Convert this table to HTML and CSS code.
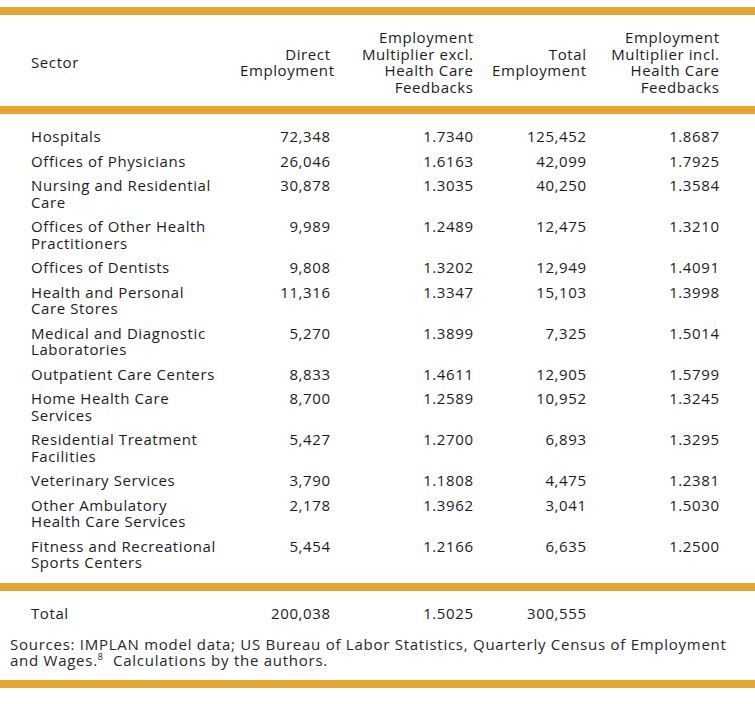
FILE: index.html
```html
<!DOCTYPE html>
<html lang="en">
<head>
<meta charset="utf-8">
<title>Health care employment multipliers</title>
<link rel="stylesheet" href="styles.css">
</head>
<body>
<div class="page">
  <div class="bar"></div>
  <div class="grid head">
    <div class="left">Sector</div>
    <div class="num">Direct<br>Employment</div>
    <div class="num">Employment<br>Multiplier excl.<br>Health Care<br>Feedbacks</div>
    <div class="num">Total<br>Employment</div>
    <div class="num">Employment<br>Multiplier incl.<br>Health Care<br>Feedbacks</div>
  </div>
  <div class="bar"></div>
  <div class="grid rows">
    <div class="left">Hospitals</div><div class="num">72,348</div><div class="num">1.7340</div><div class="num">125,452</div><div class="num">1.8687</div>
    <div class="left">Offices of Physicians</div><div class="num">26,046</div><div class="num">1.6163</div><div class="num">42,099</div><div class="num">1.7925</div>
    <div class="left">Nursing and Residential<br>Care</div><div class="num">30,878</div><div class="num">1.3035</div><div class="num">40,250</div><div class="num">1.3584</div>
    <div class="left">Offices of Other Health<br>Practitioners</div><div class="num">9,989</div><div class="num">1.2489</div><div class="num">12,475</div><div class="num">1.3210</div>
    <div class="left">Offices of Dentists</div><div class="num">9,808</div><div class="num">1.3202</div><div class="num">12,949</div><div class="num">1.4091</div>
    <div class="left">Health and Personal<br>Care Stores</div><div class="num">11,316</div><div class="num">1.3347</div><div class="num">15,103</div><div class="num">1.3998</div>
    <div class="left">Medical and Diagnostic<br>Laboratories</div><div class="num">5,270</div><div class="num">1.3899</div><div class="num">7,325</div><div class="num">1.5014</div>
    <div class="left">Outpatient Care Centers</div><div class="num">8,833</div><div class="num">1.4611</div><div class="num">12,905</div><div class="num">1.5799</div>
    <div class="left">Home Health Care<br>Services</div><div class="num">8,700</div><div class="num">1.2589</div><div class="num">10,952</div><div class="num">1.3245</div>
    <div class="left">Residential Treatment<br>Facilities</div><div class="num">5,427</div><div class="num">1.2700</div><div class="num">6,893</div><div class="num">1.3295</div>
    <div class="left">Veterinary Services</div><div class="num">3,790</div><div class="num">1.1808</div><div class="num">4,475</div><div class="num">1.2381</div>
    <div class="left">Other Ambulatory<br>Health Care Services</div><div class="num">2,178</div><div class="num">1.3962</div><div class="num">3,041</div><div class="num">1.5030</div>
    <div class="left">Fitness and Recreational<br>Sports Centers</div><div class="num">5,454</div><div class="num">1.2166</div><div class="num">6,635</div><div class="num">1.2500</div>
  </div>
  <div class="bar"></div>
  <div class="grid total">
    <div class="left">Total</div><div class="num">200,038</div><div class="num">1.5025</div><div class="num">300,555</div><div class="num"></div>
  </div>
  <p class="source">Sources: IMPLAN model data; US Bureau of Labor Statistics, Quarterly Census of Employment<br>and Wages.<sup>8</sup>&nbsp; Calculations by the authors.</p>
  <div class="bar"></div>
</div>
</body>
</html>
```

FILE: styles.css
```css
html, body {
  margin: 0;
  padding: 0;
  background: #ffffff;
}
body {
  color: #1c1c24;
  font-family: "Open Sans", "Liberation Sans", sans-serif;
  font-size: 15px;
  letter-spacing: 0.6px;
}
.page {
  width: 755px;
  padding-top: 7px;
}
.bar {
  height: 8px;
  background: #e3a536;
}
.grid {
  display: grid;
  grid-template-columns: 209px 90px 143px 113px 133px;
  padding: 0 36px 0 31px;
  line-height: 16.5px;
}
.num {
  text-align: right;
  white-space: nowrap;
  margin-right: -0.6px;
}
.left {
  text-align: left;
  white-space: nowrap;
}
.head {
  padding-top: 14px;
  padding-bottom: 11px;
  align-items: center;
}
.rows {
  padding-top: 10px;
  padding-bottom: 8px;
}
.rows > div {
  padding: 4px 0;
}
.total {
  padding-top: 14px;
}
.source {
  margin: 15px 0 12px;
  padding-left: 10px;
  line-height: 16px;
  letter-spacing: 0.74px;
  white-space: nowrap;
  color: #26262e;
}
.source sup {
  font-size: 9px;
  line-height: 0;
  vertical-align: 6px;
}
```
